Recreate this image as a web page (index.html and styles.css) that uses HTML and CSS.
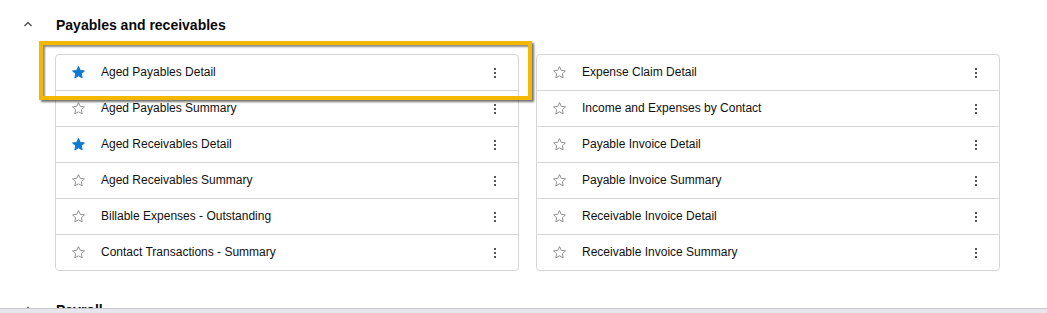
FILE: index.html
```html
<!DOCTYPE html>
<html lang="en">

<head>
    <meta charset="UTF-8">
    <meta name="viewport" content="width=device-width, initial-scale=1.0">
    <title>Reports</title>
    <link rel="stylesheet" href="styles.css">
</head>

<body>
    <section class="group">
        <div class="group-head">
            <svg class="chevron" width="10" height="6" viewBox="0 0 10 6"><polyline points="1.5,5 5,1.5 8.5,5" fill="none" stroke="#555" stroke-width="1.5"/></svg>
            <h2>Payables and receivables</h2>
        </div>

        <div class="grid">
            <ul class="card">
                <li class="row">
                    <svg class="star fav" viewBox="0 0 24 24"><path d="M12 2.5l2.9 6.1 6.6.8-4.9 4.6 1.3 6.6L12 17.3l-5.9 3.3 1.3-6.6-4.9-4.6 6.6-.8z"/></svg>
                    <span class="name">Aged Payables Detail</span>
                    <span class="kebab"><i></i><i></i><i></i></span>
                    <div class="highlight"></div>
                </li>
                <li class="row">
                    <svg class="star" viewBox="0 0 24 24"><path d="M12 2.5l2.9 6.1 6.6.8-4.9 4.6 1.3 6.6L12 17.3l-5.9 3.3 1.3-6.6-4.9-4.6 6.6-.8z"/></svg>
                    <span class="name">Aged Payables Summary</span>
                    <span class="kebab"><i></i><i></i><i></i></span>
                </li>
                <li class="row">
                    <svg class="star fav" viewBox="0 0 24 24"><path d="M12 2.5l2.9 6.1 6.6.8-4.9 4.6 1.3 6.6L12 17.3l-5.9 3.3 1.3-6.6-4.9-4.6 6.6-.8z"/></svg>
                    <span class="name">Aged Receivables Detail</span>
                    <span class="kebab"><i></i><i></i><i></i></span>
                </li>
                <li class="row">
                    <svg class="star" viewBox="0 0 24 24"><path d="M12 2.5l2.9 6.1 6.6.8-4.9 4.6 1.3 6.6L12 17.3l-5.9 3.3 1.3-6.6-4.9-4.6 6.6-.8z"/></svg>
                    <span class="name">Aged Receivables Summary</span>
                    <span class="kebab"><i></i><i></i><i></i></span>
                </li>
                <li class="row">
                    <svg class="star" viewBox="0 0 24 24"><path d="M12 2.5l2.9 6.1 6.6.8-4.9 4.6 1.3 6.6L12 17.3l-5.9 3.3 1.3-6.6-4.9-4.6 6.6-.8z"/></svg>
                    <span class="name">Billable Expenses - Outstanding</span>
                    <span class="kebab"><i></i><i></i><i></i></span>
                </li>
                <li class="row">
                    <svg class="star" viewBox="0 0 24 24"><path d="M12 2.5l2.9 6.1 6.6.8-4.9 4.6 1.3 6.6L12 17.3l-5.9 3.3 1.3-6.6-4.9-4.6 6.6-.8z"/></svg>
                    <span class="name">Contact Transactions - Summary</span>
                    <span class="kebab"><i></i><i></i><i></i></span>
                </li>
            </ul>

            <ul class="card">
                <li class="row">
                    <svg class="star" viewBox="0 0 24 24"><path d="M12 2.5l2.9 6.1 6.6.8-4.9 4.6 1.3 6.6L12 17.3l-5.9 3.3 1.3-6.6-4.9-4.6 6.6-.8z"/></svg>
                    <span class="name">Expense Claim Detail</span>
                    <span class="kebab"><i></i><i></i><i></i></span>
                </li>
                <li class="row">
                    <svg class="star" viewBox="0 0 24 24"><path d="M12 2.5l2.9 6.1 6.6.8-4.9 4.6 1.3 6.6L12 17.3l-5.9 3.3 1.3-6.6-4.9-4.6 6.6-.8z"/></svg>
                    <span class="name">Income and Expenses by Contact</span>
                    <span class="kebab"><i></i><i></i><i></i></span>
                </li>
                <li class="row">
                    <svg class="star" viewBox="0 0 24 24"><path d="M12 2.5l2.9 6.1 6.6.8-4.9 4.6 1.3 6.6L12 17.3l-5.9 3.3 1.3-6.6-4.9-4.6 6.6-.8z"/></svg>
                    <span class="name">Payable Invoice Detail</span>
                    <span class="kebab"><i></i><i></i><i></i></span>
                </li>
                <li class="row">
                    <svg class="star" viewBox="0 0 24 24"><path d="M12 2.5l2.9 6.1 6.6.8-4.9 4.6 1.3 6.6L12 17.3l-5.9 3.3 1.3-6.6-4.9-4.6 6.6-.8z"/></svg>
                    <span class="name">Payable Invoice Summary</span>
                    <span class="kebab"><i></i><i></i><i></i></span>
                </li>
                <li class="row">
                    <svg class="star" viewBox="0 0 24 24"><path d="M12 2.5l2.9 6.1 6.6.8-4.9 4.6 1.3 6.6L12 17.3l-5.9 3.3 1.3-6.6-4.9-4.6 6.6-.8z"/></svg>
                    <span class="name">Receivable Invoice Detail</span>
                    <span class="kebab"><i></i><i></i><i></i></span>
                </li>
                <li class="row">
                    <svg class="star" viewBox="0 0 24 24"><path d="M12 2.5l2.9 6.1 6.6.8-4.9 4.6 1.3 6.6L12 17.3l-5.9 3.3 1.3-6.6-4.9-4.6 6.6-.8z"/></svg>
                    <span class="name">Receivable Invoice Summary</span>
                    <span class="kebab"><i></i><i></i><i></i></span>
                </li>
            </ul>
        </div>
    </section>

    <section class="group">
        <div class="group-head">
            <svg class="chevron" width="10" height="6" viewBox="0 0 10 6"><polyline points="1.5,5 5,1.5 8.5,5" fill="none" stroke="#555" stroke-width="1.5"/></svg>
            <h2>Payroll</h2>
        </div>
    </section>

    <div class="bottom-bar"></div>
</body>

</html>
```

FILE: styles.css
```css
body {
    font-family: "Liberation Sans", Arial, sans-serif;
    background: #fff;
    color: #000;
    margin: 0;
    overflow: hidden;
}

.group {
    padding-bottom: 14px;
}

.group-head {
    height: 48px;
    display: flex;
    align-items: center;
}

.chevron {
    margin-left: 23px;
    margin-right: 23px;
}

.group-head h2 {
    margin: 0;
    padding-top: 2px;
    font-size: 14px;
    font-weight: bold;
    color: #0a0a0a;
}

.grid {
    display: grid;
    grid-template-columns: 464px 464px;
    column-gap: 17px;
    margin-top: 6px;
    padding-left: 55px;
}

.card {
    list-style: none;
    margin: 0;
    padding: 0;
    border: 1px solid #d6d6d6;
    border-radius: 4px;
    background: #fff;
}

.row {
    position: relative;
    height: 35px;
    display: flex;
    align-items: center;
    border-bottom: 1px solid #d6d6d6;
    font-size: 12px;
}

.row:last-child {
    border-bottom: none;
}

.star {
    width: 15px;
    height: 15px;
    margin-left: 15px;
    margin-right: 15px;
    fill: none;
    stroke: #8a8a8a;
    stroke-width: 1.5;
    stroke-linejoin: round;
}

.star.fav {
    fill: #0b78d0;
    stroke: #0b78d0;
}

.name {
    flex: 1;
    color: #111;
    padding-bottom: 1px;
}

.kebab {
    display: flex;
    flex-direction: column;
    gap: 2px;
    margin-right: 22px;
}

.kebab i {
    display: block;
    width: 2px;
    height: 2px;
    background: #555;
}

.highlight {
    position: absolute;
    left: -17px;
    top: -14px;
    right: -14px;
    bottom: -10px;
    border: 4px solid #f5b800;
    box-shadow: 2px 2px 2px rgba(0, 0, 0, 0.55), inset 2px 2px 2px rgba(0, 0, 0, 0.45);
    pointer-events: none;
}

.bottom-bar {
    position: fixed;
    left: 0;
    right: 0;
    bottom: 0;
    height: 4px;
    background: #e6e6ec;
    border-top: 1px solid #c8c8d0;
}
```
